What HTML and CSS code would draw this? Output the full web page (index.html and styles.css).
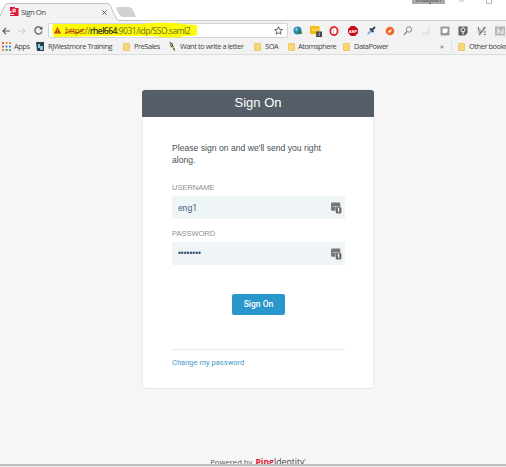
FILE: index.html
```html
<!DOCTYPE html>
<html lang="en">
<head>
<meta charset="utf-8">
<title>Sign On</title>
<link rel="stylesheet" href="styles.css">
</head>
<body>
<header class="browser">
  <div class="titlebar">
    <svg class="tab-shape" width="140" height="21" viewBox="0 0 140 21"><path d="M0 16L5 5Q6 3.5 8 3.5H107Q109 3.5 110 5L116 18Q117 20.5 119 20.5V21H0Z" fill="#f3f3f3"/><path d="M0 16L5 5Q6 3.5 8 3.5H107Q109 3.5 110 5L116 18Q117 20.5 119 20.5H140" fill="none" stroke="#c2c2c2"/><path d="M117 7.5H129Q131 7.5 132 9L135.500 16.500H123Q121 16.500 120 15L116.500 8.500Z" fill="#d2d2d2" stroke="#c4c4c4" stroke-width=".6"/></svg>
    <div class="tab">
      <svg width="9" height="9" viewBox="0 0 9 9"><path d="M0 0H5V1H8.500V9H0V6H1.500V4H0Z" fill="#dd1738"/><path d="M3 5V2.300H5.200V4.800H3M0 7.500H4" fill="none" stroke="#fff" stroke-width="1"/></svg>
      <span class="tab-title">Sign On</span>
      <svg class="tab-close" width="5" height="5" viewBox="0 0 5 5"><path d="M.5 .5L4.500 4.500M4.500 .5L.5 4.500" stroke="#555"/></svg>
    </div>
    <div class="window-user"><span>maxjoin</span></div>
    <svg class="window-buttons" width="40" height="5" viewBox="0 0 40 5"><path d="M0 1H5" stroke="#bbb"/><path d="M27.500 0V3.500H32.500V0" fill="none" stroke="#bbb"/></svg>
  </div>
  <div class="toolbar">
    <div class="nav">
      <svg width="8" height="8" viewBox="0 0 8 8"><path d="M8 4H1M4 .8L.9 4L4 7.200" fill="none" stroke="#555" stroke-width="1.100"/></svg>
      <svg width="8" height="8" viewBox="0 0 8 8"><path d="M0 4H7M4 .8L7.100 4L4 7.200" fill="none" stroke="#d0d0d0" stroke-width="1.100"/></svg>
      <svg width="9" height="9" viewBox="0 0 9 9"><path d="M7.600 2.600A3.600 3.600 0 1 0 8 5.400" fill="none" stroke="#555" stroke-width="1.200"/><path d="M8.500 .5V3.700H5.300Z" fill="#555"/></svg>
    </div>
    <div class="address">
      <svg class="marker" width="148" height="17" viewBox="0 0 148 17"><path d="M2 2L90 2Q105 0 124 1Q136 3 146 3V13Q142 14 134 14Q124 17 103 14L60 14L3 15L1 8Z" fill="#fdfb09"/></svg>
      <svg class="warn" width="7" height="7" viewBox="0 0 7 7"><path d="M3.500 0L7 6.600H0Z" fill="#c8320b"/><path d="M3.500 2.300V4.300M3.500 5V5.800" stroke="#f8d60a" stroke-width=".8"/></svg>
      <span class="url"><span class="scheme">https<svg width="19" height="7" viewBox="0 0 19 7"><path d="M0 5.500Q6 2 10 4T19 1" fill="none" stroke="#c03a0a" stroke-width="1.100"/></svg></span>://<b>rhel664</b>:9031/idp/SSO.saml2</span>
      <svg class="star" width="9" height="9" viewBox="0 0 9 9"><path d="M4.500 .7L5.600 3.300L8.400 3.600L6.300 5.400L6.900 8.200L4.500 6.700L2.100 8.200L2.700 5.400L.6 3.600L3.400 3.300Z" fill="none" stroke="#555" stroke-width=".9"/></svg>
    </div>
    <div class="extensions">
      <svg viewBox="0 0 12 12"><circle cx="5.500" cy="5.500" r="4" fill="#2586bd"/><path d="M3 3L5 2L6 5L4 7Z" fill="#72bddd"/><path d="M6 5L9.500 6L10 9L6 9Z" fill="#35863c"/></svg>
      <svg viewBox="0 0 12 12"><rect x="0" y="1" width="9.500" height="8" rx="1" fill="#f6be15"/><path d="M2 5H8" stroke="#fff" stroke-dasharray="1.400 .6"/><rect x="6.200" y="6.500" width="5.800" height="5.500" fill="#444"/><path d="M9.200 7.500V11" stroke="#ddd" stroke-width=".8"/></svg>
      <svg viewBox="0 0 12 12"><ellipse cx="6" cy="6" rx="3.600" ry="4.100" fill="#fff" stroke="#e0232d" stroke-width="1.800"/><path d="M5.500 3V9" stroke="#f5b5b5"/></svg>
      <svg viewBox="0 0 12 12"><path d="M4 1H8L11 4V8L8 11H4L1 8V4Z" fill="#c90d17"/><text x="6" y="7.600" class="abp">ABP</text></svg>
      <svg viewBox="0 0 12 12"><path d="M2 10L3 7.500L6 4.500L7.500 6L4.500 9Z" fill="#8ab0dc"/><path d="M5.500 4L8 6.500M7 5L9.500 2.500" stroke="#343b55" stroke-width="1.800" stroke-linecap="round"/></svg>
      <svg viewBox="0 0 12 12"><circle cx="6" cy="6" r="4.300" fill="#f0662b"/><path d="M4 7L5.500 5.500L8 4L6.500 7L5 8Z" fill="#fff"/></svg>
      <svg viewBox="0 0 12 12"><circle cx="7" cy="4.500" r="2.700" fill="none" stroke="#888"/><path d="M5 6.500L2 10" stroke="#888" stroke-width="1.300"/></svg>
      <svg viewBox="0 0 12 12"><path d="M8.500 2V8M2 8.500H9" fill="none" stroke="#dedede" stroke-width="1.800"/></svg>
      <svg viewBox="0 0 12 12"><rect x="1.500" y="1.500" width="9" height="9" rx="1" fill="#999"/><path d="M3.500 3.500H8.500V7L7 8H3.500Z" fill="#fff"/></svg>
      <svg viewBox="0 0 12 12"><path d="M1.500 1.500H10.500V8L8 10.500H1.500Z" fill="#606060"/><circle cx="6" cy="4.800" r="2" fill="none" stroke="#fff"/><path d="M6 7V9.500" stroke="#fff"/></svg>
      <svg viewBox="0 0 12 12"><path d="M2.500 2V5H5M9.500 2L3 10M7 3H9M2 7H5M7.500 7H10M8 9.500H10" fill="none" stroke="#777" stroke-width="1.200"/></svg>
      <svg viewBox="0 0 12 12"><rect x="1" y="1.500" width="10" height="9" fill="#b7b7b7"/><path d="M4 3V9M4 7Q6 4 7 7V9M9 4V9" fill="none" stroke="#fff"/></svg>
    </div>
  </div>
  <nav class="bookmarks">
    <a class="apps"><svg width="9" height="9" viewBox="0 0 9 9"><path d="M0 1H2M0 4.500H2" stroke="#e25846" stroke-width="2"/><path d="M3.500 1H5.500M7 1H9M0 8H2" stroke="#e98b43" stroke-width="2"/><path d="M3.500 4.500H5.500M7 4.500H9" stroke="#4389d8" stroke-width="2"/><path d="M3.500 8H5.500M7 8H9" stroke="#55a66b" stroke-width="2"/></svg><span>Apps</span></a>
    <a class="rj"><svg width="9" height="9" viewBox="0 0 9 9"><path d="M0 0H8V9H1Z" fill="#26434d"/><path d="M2 2H4V4H7V8H4V6H2Z" fill="#8dc6d8"/></svg><span>RJWestmore Training</span></a>
    <a class="pre"><i class="folder"></i><span>PreSales</span></a>
    <a class="letter"><svg width="7" height="9" viewBox="0 0 7 9"><path d="M1 0L2.500 5M2.500 1L5.500 8.500" stroke="#4b4a32" stroke-width="1.200"/><path d="M1 1L3 4M4 5L6 7" stroke="#d6c22d"/></svg><span>Want to write a letter</span></a>
    <a class="soa"><i class="folder"></i><span>SOA</span></a>
    <a class="atom"><i class="folder"></i><span>Atomsphere</span></a>
    <a class="data"><i class="folder"></i><span>DataPower</span></a>
    <span class="more">»</span>
    <a class="other"><i class="folder"></i><span>Other bookr</span></a>
  </nav>
</header>
<main class="page">
  <section class="card">
    <h1>Sign On</h1>
    <form class="form">
      <p class="message">Please sign on and we'll send you right along.</p>
      <div class="label">USERNAME</div>
      <div class="field"><span>eng1</span><svg width="11" height="12" viewBox="0 0 10 11"><path d="M1 .5H7.500Q8.500 .5 8.500 1.500V5H4V8H1Q0 8 0 7V1.500Q0 .5 1 .5Z" fill="#777"/><path d="M1.500 4.200H7.500" stroke="#e4e8e8" stroke-width=".7" stroke-dasharray="1.200 .6"/><rect x="4.300" y="4.800" width="5.200" height="5.700" rx="1" fill="#666"/><path d="M6 6.700L7 6V9.400" fill="none" stroke="#fff"/></svg></div>
      <div class="label second">PASSWORD</div>
      <div class="field"><span class="dots">••••••••</span><svg width="11" height="12" viewBox="0 0 10 11"><path d="M1 .5H7.500Q8.500 .5 8.500 1.500V5H4V8H1Q0 8 0 7V1.500Q0 .5 1 .5Z" fill="#777"/><path d="M1.500 4.200H7.500" stroke="#e4e8e8" stroke-width=".7" stroke-dasharray="1.200 .6"/><rect x="4.300" y="4.800" width="5.200" height="5.700" rx="1" fill="#666"/><path d="M6 6.700L7 6V9.400" fill="none" stroke="#fff"/></svg></div>
      <div class="button">Sign On</div>
      <div class="links"><a>Change my password</a></div>
    </form>
  </section>
  <footer class="powered"><span>Powered by</span><span class="brand"><b>Ping</b>Identity<sup>•</sup></span></footer>
</main>
<div class="bottom-edge"></div>
</body>
</html>
```

FILE: styles.css
```css
* { box-sizing: border-box; }
body {
  margin: 0;
  width: 506px;
  height: 467px;
  overflow: hidden;
  display: flex;
  flex-direction: column;
  background: #f6f6f6;
  font-family: "Liberation Sans", Arial, sans-serif;
}
svg { display: block; flex: none; }
.browser { height: 55px; flex: none; font-family: "Open Sans", sans-serif; color: #444; }
.titlebar { position: relative; height: 21px; background: #fff; border-bottom: 1px solid #d0d0d0; }
.tab-shape { position: absolute; left: 0; top: 0; }
.tab { position: relative; display: flex; align-items: center; width: 107px; height: 22px; padding: 1px 0 0 10px; }
.tab-title { font-size: 7.7px; letter-spacing: -.45px; margin-left: 2px; flex: 1; line-height: 10px; }
.tab-close { margin-top: 1px; }
.window-user {
  position: absolute; left: 412px; top: 0;
  width: 33px; height: 4px; overflow: hidden;
  background: #aaa; color: #444; font-size: 7px; line-height: 8px; text-align: center;
}
.window-user span { display: block; margin-top: -4px; }
.window-buttons { position: absolute; left: 459px; top: 0; }
.toolbar { display: flex; height: 18px; padding-top: 2px; background: #f2f2f2; }
.nav { display: flex; width: 48px; padding-left: 2px; gap: 8px; align-items: center; height: 15px; }
.address {
  position: relative; display: flex; align-items: center;
  width: 240px; height: 15px; padding: 0 4px 0 5px;
  background: #fff; border: 1px solid #d4d4d4; border-radius: 2px;
}
.marker { position: absolute; left: 2px; top: -2px; }
.warn, .url { position: relative; }
.url { margin-left: 4px; font-size: 8.5px; line-height: 12px; white-space: nowrap; flex: 1; color: #6f6c1c; letter-spacing: -.48px; }
.url b { font-weight: 400; color: #222; -webkit-text-stroke: .2px #222; }
.scheme { position: relative; color: #ae6614; }
.scheme svg { position: absolute; left: 0; top: 3px; }
.extensions { display: flex; height: 15px; align-items: center; margin-left: 4px; gap: 6.4px; }
.extensions svg { width: 12px; height: 12px; }
.abp { font: bold 4px "Liberation Sans", sans-serif; fill: #fff; text-anchor: middle; }
.bookmarks {
  display: grid; height: 16px; align-items: center;
  grid-template-columns: 36px 87px 46px 85px 34px 55px 97px 17px 1fr;
  background: #f2f2f2; border-bottom: 1px solid #dcdcdc;
  font-size: 7.4px; letter-spacing: -.42px; line-height: 11px; white-space: nowrap;
}
.bookmarks a { display: flex; align-items: center; gap: 4px; }
.bookmarks .apps { padding-left: 2px; gap: 3px; }
.bookmarks .rj { gap: 3px; }
.bookmarks .other { height: 12px; border-left: 1px solid #e2e2e2; margin-left: -6px; padding-left: 6px; }
.bookmarks .atom { gap: 3px; }
.folder { width: 7px; height: 8px; background: #f7d675; border: 1px solid #edca69; border-radius: 1px; flex: none; }
.page {
  flex: 1; min-height: 0; display: flex; flex-direction: column; align-items: center;
  padding: 34px 0 0 10px; overflow: hidden; background: #f6f6f6;
}
.card {
  width: 232px; height: 300px; flex: none; background: #fff;
  border: 1px solid #ececec; border-bottom-color: #e4e4e4; border-radius: 4px;
}
h1 {
  margin: 0 -1px; height: 27px; border-radius: 3px 3px 0 0;
  background: #565f67; color: #fff; font-size: 13px; line-height: 26px; font-weight: 400; text-align: center;
}
.form { display: flex; flex-direction: column; padding: 25px 28px 0 29px; }
.message { margin: 0; font-size: 8.65px; line-height: 12px; color: #484f56; }
.label { margin-top: 17px; height: 9px; font-size: 7.5px; line-height: 9px; color: #899096; }
.label.second { margin-top: 10px; }
.field {
  display: flex; align-items: center; justify-content: space-between;
  height: 23px; margin-top: 4px; padding: 0 3px 0 6px;
  background: #eff5f6; color: #4a6285; font: 8.7px Roboto, sans-serif;
}
.dots { font-family: "Liberation Sans", sans-serif; font-size: 8.2px; color: #354e78; }
.button {
  align-self: center; width: 53px; height: 21px; margin-top: 29px;
  background: #2996cc; border-radius: 2px; color: #fff;
  font: 500 8.5px/21px Roboto, sans-serif; text-align: center;
}
.links { margin-top: 34px; border-top: 1px solid #ebebeb; padding-top: 7px; font: 7.55px/11px Roboto, sans-serif; color: #4199cb; }
.powered { display: flex; align-items: baseline; gap: 3px; margin-top: 67px; flex: none; font: 7.7px/12px "Open Sans", sans-serif; color: #56606a; }
.brand { font: 8.6px/12px "Open Sans", sans-serif; color: #394047; }
.brand b { color: #df1834; }
.brand sup { font-size: 4px; line-height: 0; }
.bottom-edge { flex: none; height: 3px; background: #ebebeb; border-top: 2px solid #bebebe; }
```
